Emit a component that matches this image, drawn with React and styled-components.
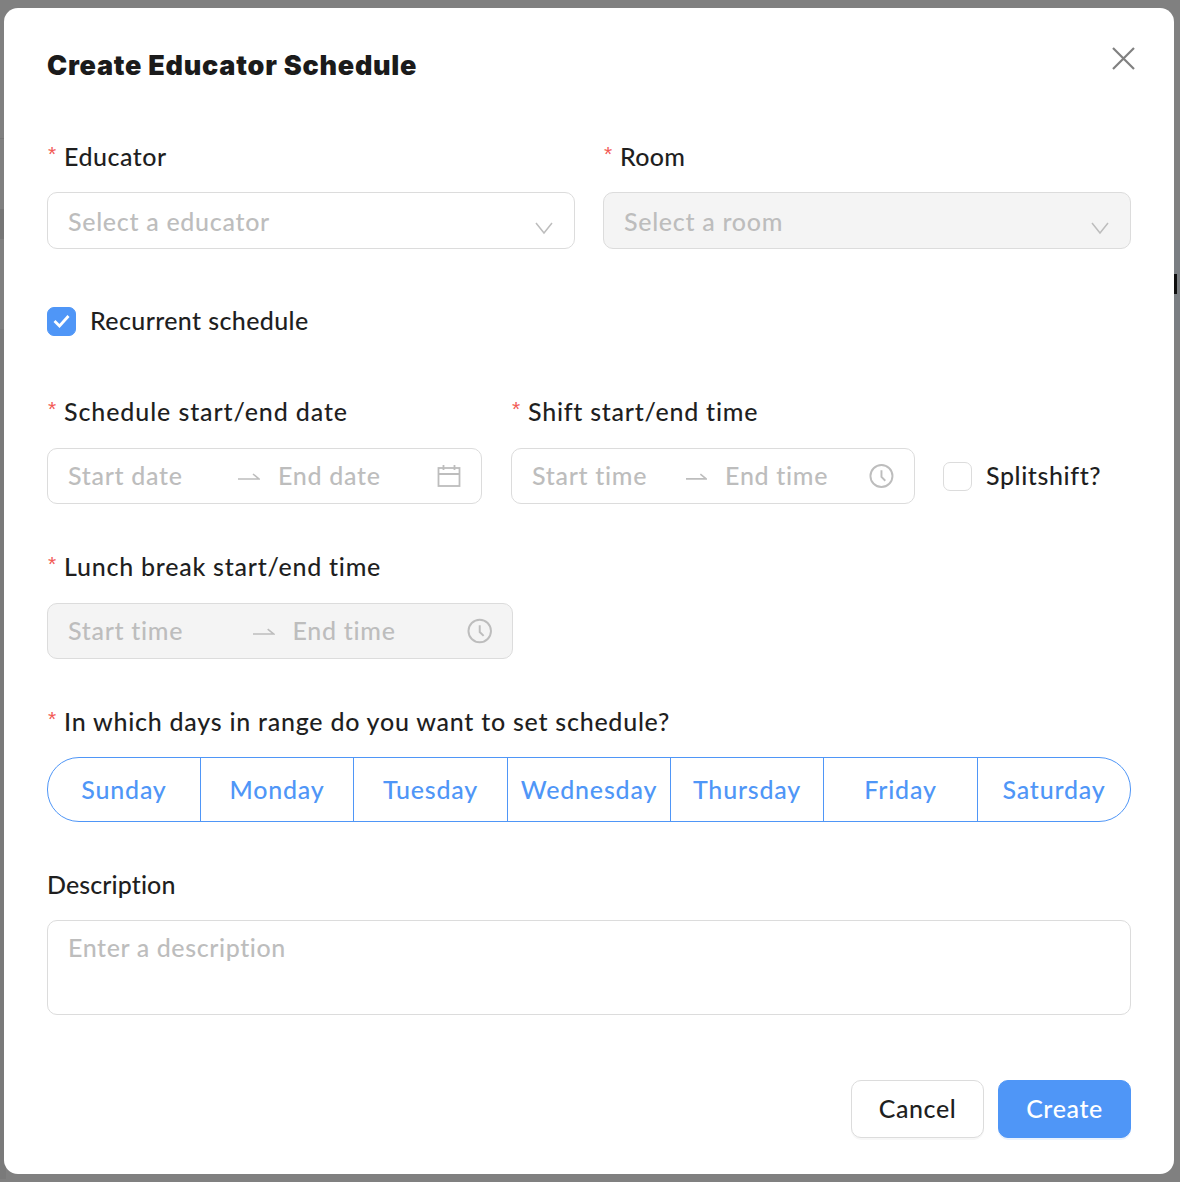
import React from 'react';
import styled, { createGlobalStyle } from 'styled-components';

const GlobalStyle = createGlobalStyle`
  html, body {
    margin: 0;
    padding: 0;
    background: #808080;
  }
  * {
    box-sizing: border-box;
  }
`;

const Backdrop = styled.div`
  position: relative;
  width: 1180px;
  height: 1182px;
  padding: 8px 6px 8px 4px;
  background: #808080;
  font-family: Lato, "Noto Sans", sans-serif;
  font-weight: 500;
  color: #1f1f1f;
`;

// the page behind the overlay, only its edge shows past the modal
const PageBand = styled.div`
  position: absolute;
  top: ${p => p.$top}px;
  left: ${p => (p.$side === 'left' ? 0 : 'auto')};
  right: ${p => (p.$side === 'right' ? p.$inset || 0 : 'auto')}px;
  width: ${p => p.$width || 6}px;
  height: ${p => p.$height}px;
  background: ${p => p.$color};
`;

const Modal = styled.div`
  position: relative;
  height: 1166px;
  background: #fff;
  border-radius: 14px;
  padding: 38px 43px 36px 43px;
  display: flex;
  flex-direction: column;
`;

const Title = styled.h2`
  margin: 1px 0 55px;
  font-family: Inter, Lato, sans-serif;
  font-size: 27px;
  line-height: 38px;
  font-weight: 900;
  letter-spacing: 0.75px;
  color: #1b1b1b;
`;

const CloseButton = styled.button`
  position: absolute;
  top: 37px;
  right: 37px;
  width: 27px;
  height: 27px;
  padding: 2px;
  border: 0;
  background: none;
  color: #808080;
  display: flex;
`;

const Row = styled.div`
  display: flex;
  gap: ${p => p.$gap || 28}px;
  align-items: ${p => p.$align || 'stretch'};
  margin-bottom: ${p => p.$mb || 0}px;
`;

const Field = styled.div`
  width: ${p => (p.$width ? p.$width + 'px' : 'auto')};
  flex: ${p => (p.$width ? 'none' : 1)};
`;

const Label = styled.div`
  font-size: 25px;
  line-height: 32px;
  letter-spacing: ${p => p.$spacing ?? 0.75}px;
  margin-bottom: ${p => p.$mb || 20}px;
  margin-top: ${p => p.$mt || 0}px;
  display: flex;
  color: #1f1f1f;
`;

const Star = styled.span`
  color: #f25a55;
  font-family: "Liberation Sans", sans-serif;
  font-size: 21px;
  line-height: 21px;
  padding-top: 3px;
  padding-left: 1px;
  width: 17px;
  flex: none;
`;

const Control = styled.div`
  width: ${p => (p.$width ? p.$width + 'px' : 'auto')};
  height: ${p => p.$height || 56}px;
  border: 1px solid #dcdcdc;
  border-radius: 10px;
  background: ${p => (p.$disabled ? '#f4f4f4' : '#fff')};
  padding: 0 20px;
  display: flex;
  align-items: center;
  color: #bdbdbd;
  font-size: 25px;
  letter-spacing: 0.7px;
`;

const Placeholder = styled.span`
  width: ${p => (p.$width ? p.$width + 'px' : 'auto')};
  flex: ${p => (p.$grow ? 1 : 'none')};
  margin-left: ${p => p.$ml || 0}px;
  padding-bottom: ${p => (p.$grow ? 0 : 2)}px;
  white-space: nowrap;
`;

const Chevron = styled.svg`
  flex: none;
  margin: 14px 0 0 0;
`;

const CheckRow = styled.label`
  display: flex;
  align-items: center;
  gap: 14px;
  height: ${p => p.$height || 32}px;
  margin-left: ${p => p.$ml || 0}px;
  font-size: 25px;
  line-height: 32px;
  letter-spacing: ${p => p.$spacing ?? 0.6}px;
  white-space: nowrap;
`;

const CheckText = styled.span`
  padding-bottom: 2px;
`;

const Box = styled.span`
  width: 29px;
  height: 29px;
  border-radius: 7px;
  flex: none;
  display: flex;
  align-items: center;
  justify-content: center;
  background: ${p => (p.$checked ? '#4f96f7' : '#fff')};
  border: 1px solid ${p => (p.$checked ? '#4f96f7' : '#dcdcdc')};
`;

const RangeRow = styled.div`
  display: flex;
  gap: 29px;
  align-items: flex-end;
  margin: 58px 0 46px;
`;

const LunchField = styled.div`
  width: 466px;
  margin-bottom: 46px;
`;

const Days = styled.div`
  display: flex;
  height: 65px;
  border: 1px solid #4f96f7;
  border-radius: 32px;
  overflow: hidden;
`;

const Day = styled.div`
  width: ${p => p.$width}px;
  flex: none;
  display: flex;
  align-items: center;
  justify-content: center;
  padding-bottom: 2px;
  color: #4f96f7;
  font-size: 25px;
  letter-spacing: 0.8px;
  & + & {
    border-left: 1px solid #4f96f7;
  }
`;

const TextArea = styled.div`
  height: 95px;
  border: 1px solid #dcdcdc;
  border-radius: 10px;
  padding: 9px 20px;
  color: #bdbdbd;
  font-size: 25px;
  line-height: 34px;
  letter-spacing: 0.6px;
`;

const Footer = styled.div`
  display: flex;
  justify-content: flex-end;
  gap: 14px;
  margin-top: auto;
`;

const Button = styled.button`
  width: ${p => p.$width}px;
  height: 58px;
  padding: 0 0 3px;
  border-radius: 10px;
  font-family: inherit;
  font-size: 25px;
  font-weight: 500;
  letter-spacing: 0.6px;
  border: 1px solid ${p => (p.$primary ? '#4f96f7' : '#dcdcdc')};
  background: ${p => (p.$primary ? '#4f96f7' : '#fff')};
  color: ${p => (p.$primary ? '#fff' : '#1f1f1f')};
  box-shadow: 0 2px 0 ${p => (p.$primary ? 'rgba(79,150,247,0.12)' : 'rgba(0,0,0,0.03)')};
`;

const ChevronDown = () => (
  <Chevron width="20" height="14" viewBox="0 0 20 14" fill="none" stroke="#bdbdbd" strokeWidth="1.5">
    <path d="M2 2 L10 12 L18 2" />
  </Chevron>
);

const ArrowIcon = () => (
  <svg width="22" height="10" viewBox="0 0 22 10" fill="none" stroke="#bdbdbd" strokeWidth="1.6">
    <path d="M0 8 H21 L15 3" />
  </svg>
);

const CalendarIcon = () => (
  <svg width="24" height="24" viewBox="0 0 24 24" fill="none" stroke="#bdbdbd" strokeWidth="1.8">
    <rect x="1.5" y="4" width="21" height="18" />
    <path d="M1.5 10 H22.5 M6.5 1 V6 M17.5 1 V6" />
  </svg>
);

const ClockIcon = () => (
  <svg width="26" height="26" viewBox="0 0 26 26" fill="none" stroke="#bdbdbd" strokeWidth="2">
    <circle cx="13" cy="13" r="11.5" />
    <path d="M13 7 V14 L17 18" />
  </svg>
);

const RangeInput = ({ start, end, startWidth, endWidth, icon, disabled }) => (
  <Control $disabled={disabled}>
    <Placeholder $width={startWidth}>{start}</Placeholder>
    <ArrowIcon />
    <Placeholder $width={endWidth} $ml={18}>{end}</Placeholder>
    {icon}
  </Control>
);

const days = [
  ['Sunday', 152],
  ['Monday', 153],
  ['Tuesday', 154],
  ['Wednesday', 163],
  ['Thursday', 153],
  ['Friday', 154],
  ['Saturday', 153]
];

const App = () => (
  <Backdrop>
    <GlobalStyle />
    <PageBand $side="left" $top={138} $height={1} $color="#767676" />
    <PageBand $side="left" $top={209} $height={30} $color="#767676" />
    <PageBand $side="left" $top={329} $height={850} $color="#7a7a7a" />
    <PageBand $side="right" $top={240} $height={90} $color="#7a7e82" />
    <PageBand $side="right" $top={274} $height={20} $width={3} $inset={3} $color="#0d0d0d" />
    <Modal>
      <Title>Create Educator Schedule</Title>
      <CloseButton aria-label="Close">
        <svg width="23" height="23" viewBox="0 0 23 23" fill="none" stroke="currentColor" strokeWidth="2.2">
          <path d="M1 1 L22 22 M22 1 L1 22" />
        </svg>
      </CloseButton>

      <Row $mb={56}>
        <Field>
          <Label $spacing={0.5}><Star>*</Star>Educator</Label>
          <Control $height={57}>
            <Placeholder $grow>Select a educator</Placeholder>
            <ChevronDown />
          </Control>
        </Field>
        <Field>
          <Label $spacing={0.3}><Star>*</Star>Room</Label>
          <Control $height={57} $disabled>
            <Placeholder $grow>Select a room</Placeholder>
            <ChevronDown />
          </Control>
        </Field>
      </Row>

      <CheckRow $spacing={0.38}>
        <Box $checked>
          <svg width="17" height="14" viewBox="0 0 17 14" fill="none" stroke="#fff" strokeWidth="2.8">
            <path d="M1.5 7 L6.5 12 L15.5 2" />
          </svg>
        </Box>
        <CheckText>Recurrent schedule</CheckText>
      </CheckRow>

      <RangeRow>
        <Field $width={435}>
          <Label $mb={21} $spacing={0.9}><Star>*</Star>Schedule start/end date</Label>
          <RangeInput start="Start date" end="End date" startWidth={170} endWidth={159} icon={<CalendarIcon />} />
        </Field>
        <Field $width={404}>
          <Label $mb={21}><Star>*</Star>Shift start/end time</Label>
          <RangeInput start="Start time" end="End time" startWidth={154} endWidth={144} icon={<ClockIcon />} />
        </Field>
        <CheckRow $height={56} $ml={-1}>
          <Box />
          <CheckText>Splitshift?</CheckText>
        </CheckRow>
      </RangeRow>

      <LunchField>
        <Label $mb={21}><Star>*</Star>Lunch break start/end time</Label>
        <RangeInput disabled start="Start time" end="End time" startWidth={185} endWidth={174} icon={<ClockIcon />} />
      </LunchField>

      <Label><Star>*</Star>In which days in range do you want to set schedule?</Label>
      <Days>
        {days.map(([name, width]) => <Day key={name} $width={width}>{name}</Day>)}
      </Days>

      <Label $mt={46} $spacing={0.1}>Description</Label>
      <TextArea>Enter a description</TextArea>

      <Footer>
        <Button $width={133}>Cancel</Button>
        <Button $primary $width={133}>Create</Button>
      </Footer>
    </Modal>
  </Backdrop>
);

export default App;
